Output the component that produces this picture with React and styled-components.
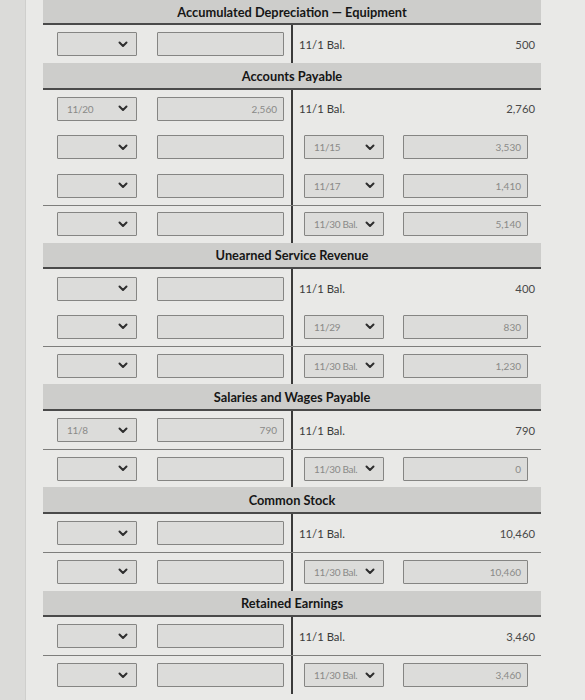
import React from 'react';
import styled, { createGlobalStyle } from 'styled-components';

const GlobalStyle = createGlobalStyle`
  html, body {
    margin: 0;
    padding: 0;
    background: #e9e9e7;
  }
  body {
    font-family: Lato, "Open Sans", "Liberation Sans", sans-serif;
  }
  * { box-sizing: border-box; }
`;

const accounts = [
  {
    title: 'Accumulated Depreciation — Equipment',
    first: true,
    rows: [{ right: { label: '11/1 Bal.', amount: '500' } }],
  },
  {
    title: 'Accounts Payable',
    rows: [
      { left: { date: '11/20', amount: '2,560' }, right: { label: '11/1 Bal.', amount: '2,760' } },
      { right: { date: '11/15', amount: '3,530' } },
      { right: { date: '11/17', amount: '1,410' } },
      { rule: true, right: { date: '11/30 Bal.', amount: '5,140' } },
    ],
  },
  {
    title: 'Unearned Service Revenue',
    rows: [
      { right: { label: '11/1 Bal.', amount: '400' } },
      { right: { date: '11/29', amount: '830' } },
      { rule: true, right: { date: '11/30 Bal.', amount: '1,230' } },
    ],
  },
  {
    title: 'Salaries and Wages Payable',
    rows: [
      { left: { date: '11/8', amount: '790' }, right: { label: '11/1 Bal.', amount: '790' } },
      { rule: true, right: { date: '11/30 Bal.', amount: '0' } },
    ],
  },
  {
    title: 'Common Stock',
    rows: [
      { right: { label: '11/1 Bal.', amount: '10,460' } },
      { rule: true, right: { date: '11/30 Bal.', amount: '10,460' } },
    ],
  },
  {
    title: 'Retained Earnings',
    rows: [
      { right: { label: '11/1 Bal.', amount: '3,460' } },
      { rule: true, right: { date: '11/30 Bal.', amount: '3,460' } },
    ],
  },
];

const Page = styled.div`
  display: flex;
  height: 700px;
  overflow: hidden;
`;

const Edge = styled.div`
  flex: none;
  width: 26px;
  background: #dbdbd9;
  border-right: 1px solid #cfcfcd;
`;

const Sheet = styled.div`
  flex: none;
  width: 498px;
  margin-left: 17px;
`;

const Header = styled.div`
  height: ${p => (p.$first ? '25px' : '26.5px')};
  background: #cdcdcb;
  border-bottom: 2px solid #4a4a4a;
  display: flex;
  align-items: center;
  justify-content: center;
  font-size: 12.8px;
  font-weight: 700;
  color: #161616;
`;

const Row = styled.div`
  display: grid;
  grid-template-columns: 250px 248px;
  height: 38.3px;
  border-top: ${p => (p.$rule ? '1.5px solid #7e7e7c' : 'none')};
`;

const LeftCell = styled.div`
  display: flex;
  align-items: center;
  gap: 20px;
  padding-left: 14px;
  border-right: 2px solid #3a3a3a;
`;

const RightCell = styled.div`
  display: flex;
  align-items: center;
  justify-content: ${p => (p.$label ? 'space-between' : 'flex-start')};
  gap: 19px;
  padding-left: ${p => (p.$label ? '6px' : '11px')};
  padding-right: 6px;
`;

const SelectBox = styled.div`
  flex: none;
  width: 80px;
  height: 24px;
  display: flex;
  align-items: center;
  justify-content: space-between;
  padding: 0 8px 0 9px;
  background: #dcdcda;
  border: 1.5px solid #858583;
  border-radius: 1px;
  font-size: 10px;
  letter-spacing: -0.3px;
  color: #8a8a88;
  white-space: nowrap;
`;

const InputBox = styled.div`
  flex: none;
  width: ${p => p.$w}px;
  height: 24px;
  display: flex;
  align-items: center;
  justify-content: flex-end;
  padding-right: 6px;
  background: #dcdcda;
  border: 1.5px solid #858583;
  border-radius: 1px;
  font-size: 10px;
  color: #8a8a88;
`;

const Label = styled.span`
  font-size: 11.3px;
  color: #3a3a3a;
`;

const Amount = styled.span`
  font-size: 11.3px;
  color: #4a4a4a;
`;

const Chevron = () => (
  <svg width="10" height="7" viewBox="0 0 10 7">
    <path d="M1.5 1.5 L5 5 L8.5 1.5" fill="none" stroke="#2e2e2e" strokeWidth="2" strokeLinecap="round" strokeLinejoin="round" />
  </svg>
);

const DateSelect = ({ value }) => (
  <SelectBox>
    <span>{value || ''}</span>
    <Chevron />
  </SelectBox>
);

const Ledger = ({ row }) => {
  const left = row.left || {};
  const right = row.right;
  return (
    <Row $rule={row.rule}>
      <LeftCell>
        <DateSelect value={left.date} />
        <InputBox $w={127}>{left.amount}</InputBox>
      </LeftCell>
      {right.label ? (
        <RightCell $label>
          <Label>{right.label}</Label>
          <Amount>{right.amount}</Amount>
        </RightCell>
      ) : (
        <RightCell>
          <DateSelect value={right.date} />
          <InputBox $w={125}>{right.amount}</InputBox>
        </RightCell>
      )}
    </Row>
  );
};

export default function App() {
  return (
    <>
      <GlobalStyle />
      <Page>
        <Edge />
        <Sheet>
          {accounts.map(acc => (
            <section key={acc.title}>
              <Header $first={acc.first}>{acc.title}</Header>
              {acc.rows.map((row, i) => (
                <Ledger key={i} row={row} />
              ))}
            </section>
          ))}
        </Sheet>
      </Page>
    </>
  );
}
